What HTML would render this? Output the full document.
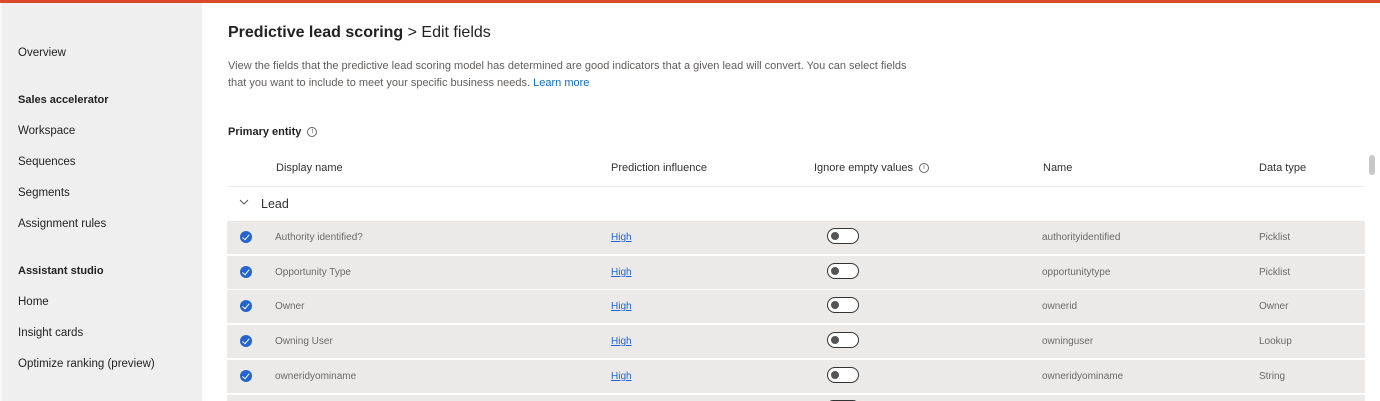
<!DOCTYPE html>
<html style="width:1380px;height:401px;overflow:hidden"><head><meta charset="utf-8"><style>
*{margin:0;padding:0;box-sizing:border-box}
body{width:1380px;height:401px;overflow:hidden;background:#fff;font-family:"Liberation Sans",sans-serif;color:#323130;position:relative}
.top{position:absolute;left:0;top:0;width:1380px;height:3px;background:#d9492a}
.side{position:absolute;left:0;top:3px;width:202px;height:398px;background:#efefef;border-left:2px solid #f8f8f8}
.side div{position:absolute;left:16px;font-size:11.5px;color:#222}
.side .b{font-weight:bold;color:#222;font-size:11px}
.abs{position:absolute;white-space:nowrap}
h1{position:absolute;left:228px;top:24px;font-size:16px;font-weight:bold;color:#222;white-space:nowrap}
h1 span{font-weight:normal}
.desc{position:absolute;left:228px;top:58px;font-size:11px;line-height:17px;color:#605e5c;width:745px}
.desc a{color:#0f6cbd;text-decoration:none}
.hd{font-size:11px;color:#323130;top:162px}
.info{display:inline-block;width:10px;height:10px;border:1px solid #666;border-radius:50%;font-size:7px;text-align:center;line-height:8px;vertical-align:middle;margin-left:6px;color:#666;font-weight:normal}
.row{position:absolute;left:227px;width:1138px;height:33px;background:#ebeae9}
.row .chk{position:absolute;left:13px;top:10px;width:12px;height:12px;border-radius:50%;background:#2564cf}
.row .chk:after{content:"";position:absolute;left:4px;top:2px;width:3px;height:5.5px;border:solid #fff;border-width:0 1.6px 1.6px 0;transform:rotate(40deg)}
.row span{position:absolute;top:11px;font-size:10px;color:#6b6a69}
.row .h{left:384px;color:#2564cf;text-decoration:underline}
.tg{position:absolute;left:600px;top:7px;width:32px;height:16px;border:1.5px solid #333;border-radius:8px;background:#fff}
.tg:after{content:"";position:absolute;left:3px;top:2.5px;width:8px;height:8px;border-radius:50%;background:#555}
</style></head><body>
<div class="top"></div>
<div class="side">
<div style="top:44px">Overview</div>
<div class="b" style="top:91px">Sales accelerator</div>
<div style="top:122px">Workspace</div>
<div style="top:153px">Sequences</div>
<div style="top:184px">Segments</div>
<div style="top:215px">Assignment rules</div>
<div class="b" style="top:262px">Assistant studio</div>
<div style="top:293px">Home</div>
<div style="top:324px">Insight cards</div>
<div style="top:355px">Optimize ranking (preview)</div>
</div>
<h1>Predictive lead scoring <span>&gt; Edit fields</span></h1>
<div class="desc">View the fields that the predictive lead scoring model has determined are good indicators that a given lead will convert. You can select fields<br>that you want to include to meet your specific business needs. <a>Learn more</a></div>
<div class="abs" style="left:228px;top:126px;font-size:11px;font-weight:bold;color:#222">Primary entity<span class="info">i</span></div>
<div class="abs hd" style="left:276px">Display name</div>
<div class="abs hd" style="left:611px">Prediction influence</div>
<div class="abs hd" style="left:814px">Ignore empty values<span class="info">i</span></div>
<div class="abs hd" style="left:1043px">Name</div>
<div class="abs hd" style="left:1259px">Data type</div>
<div class="abs" style="left:227px;top:186px;width:1138px;height:1px;background:#edebe9"></div>
<div class="abs" style="left:1369px;top:155px;width:6px;height:20px;border-radius:3px;background:#c8c8c8"></div>
<svg class="abs" style="left:239px;top:199px" width="10" height="6" viewBox="0 0 10 6"><path d="M1 1 L5 5 L9 1" fill="none" stroke="#555" stroke-width="1"/></svg>
<div class="abs" style="left:261px;top:197px;font-size:12.5px;color:#323130">Lead</div>

<div class="row" style="top:221px"><div class="chk"></div><span style="left:48px">Authority identified?</span><span class="h">High</span><div class="tg"></div><span style="left:815px">authorityidentified</span><span style="left:1032px">Picklist</span></div>
<div class="row" style="top:256px"><div class="chk"></div><span style="left:48px">Opportunity Type</span><span class="h">High</span><div class="tg"></div><span style="left:815px">opportunitytype</span><span style="left:1032px">Picklist</span></div>
<div class="row" style="top:290px"><div class="chk"></div><span style="left:48px">Owner</span><span class="h">High</span><div class="tg"></div><span style="left:815px">ownerid</span><span style="left:1032px">Owner</span></div>
<div class="row" style="top:325px"><div class="chk"></div><span style="left:48px">Owning User</span><span class="h">High</span><div class="tg"></div><span style="left:815px">owninguser</span><span style="left:1032px">Lookup</span></div>
<div class="row" style="top:360px"><div class="chk"></div><span style="left:48px">owneridyominame</span><span class="h">High</span><div class="tg"></div><span style="left:815px">owneridyominame</span><span style="left:1032px">String</span></div>
<div class="row" style="top:395px;height:6px;overflow:hidden"><div class="tg" style="top:5px;height:6px;border-bottom:none;border-radius:8px 8px 0 0"></div></div>
</body></html>
